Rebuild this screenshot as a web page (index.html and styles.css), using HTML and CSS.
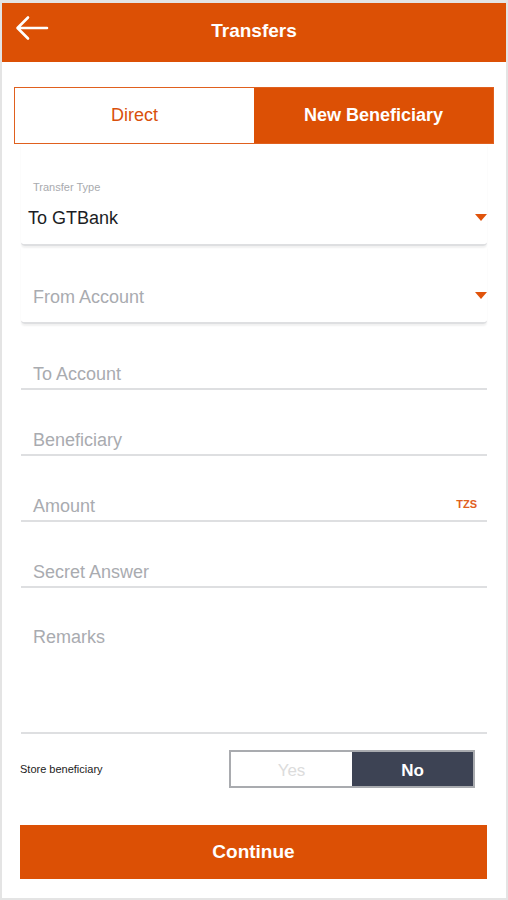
FILE: index.html
```html
<!doctype html>
<html><head>
<title>Transfers</title>
<link rel="stylesheet" href="styles.css">
</head>
<body>
<div class="screen">
	<div class="header">
		<svg class="back" width="34" height="26" viewBox="0 0 34 26">
			<path d="M32 13H3M13 2.5L2.5 13L13 23.5" fill="none" stroke="#fff" stroke-width="2.6" stroke-linecap="round" stroke-linejoin="round"/>
		</svg>
		<span class="title">Transfers</span>
	</div>

	<div class="tabs">
		<div class="tab">Direct</div>
		<div class="tab active">New Beneficiary</div>
	</div>

	<div class="form">
		<div class="select first">
			<div class="label">Transfer Type</div>
			<div class="value">To GTBank</div>
			<span class="caret"></span>
		</div>
		<div class="select">
			<div class="placeholder">From Account</div>
			<span class="caret"></span>
		</div>
		<div class="input"><div class="placeholder">To Account</div></div>
		<div class="input"><div class="placeholder">Beneficiary</div></div>
		<div class="input"><div class="placeholder">Amount</div><span class="currency">TZS</span></div>
		<div class="input"><div class="placeholder">Secret Answer</div></div>
		<div class="input remarks"><div class="placeholder">Remarks</div></div>
	</div>

	<div class="store">
		<span class="store-label">Store beneficiary</span>
		<div class="toggle">
			<div class="opt">Yes</div>
			<div class="opt on">No</div>
		</div>
	</div>

	<div class="continue">Continue</div>
</div>
</body></html>
```
FILE: styles.css
```css
body {
	margin: 0;
	font-family: "Liberation Sans", Arial, sans-serif;
}
.screen {
	width: 508px;
	height: 900px;
	box-sizing: border-box;
	border: 2px solid #e4e4e4;
	border-top-width: 3px;
	background-color: #fff;
}
.header {
	height: 59px;
	padding-bottom: 4px;
	box-sizing: border-box;
	background-color: #dc5005;
	display: flex;
	align-items: center;
	justify-content: center;
	position: relative;
}
.back {
	position: absolute;
	left: 13px;
	top: 12px;
}
.title {
	color: #fff;
	font-size: 19px;
	font-weight: bold;
}
.tabs {
	display: flex;
	margin: 25px 12px 0 12px;
	height: 57px;
	border: 1px solid #e0601e;
	box-sizing: border-box;
}
.tab {
	flex: 1;
	display: flex;
	align-items: center;
	justify-content: center;
	font-size: 18px;
	color: #d9500c;
}
.tab.active {
	background-color: #dc5005;
	color: #fff;
	font-weight: bold;
}
.form {
	margin: 0 19px 0 19px;
}
.select, .input {
	position: relative;
	padding: 40px 12px 4px 12px;
	border-bottom: 2px solid #dedfe1;
	font-size: 18px;
	line-height: 20px;
}
.select {
	border-radius: 0 0 4px 4px;
	box-shadow: 0 2px 2px rgba(0,0,0,0.06);
	padding-top: 41px;
	padding-bottom: 15px;
}
.select.first {
	padding-top: 36px;
	padding-bottom: 16px;
}
.label {
	font-size: 11px;
	line-height: 14px;
	color: #a8aaae;
	margin-bottom: 14px;
}
.value {
	color: #1b1d24;
	margin-left: -5px;
}
.placeholder {
	color: #a9abb0;
}
.caret {
	position: absolute;
	right: 0;
	bottom: 23px;
	width: 0;
	height: 0;
	border-left: 6px solid transparent;
	border-right: 6px solid transparent;
	border-top: 7px solid #e0530b;
}
.currency {
	position: absolute;
	right: 10px;
	top: 38px;
	font-size: 11px;
	font-weight: bold;
	color: #e0601e;
}
.remarks {
	padding-top: 39px;
	padding-bottom: 85px;
}
.store {
	display: flex;
	align-items: center;
	justify-content: space-between;
	margin: 16px 31px 0 18px;
}
.store-label {
	font-size: 11px;
	color: #222;
}
.toggle {
	display: flex;
	width: 246px;
	height: 38px;
	box-sizing: border-box;
	border: 2px solid #a9abaf;
}
.opt {
	flex: 1;
	display: flex;
	align-items: center;
	justify-content: center;
	padding-top: 3px;
	font-size: 17px;
	color: #dcdcdc;
}
.opt.on {
	background-color: #3d4354;
	color: #fff;
	font-weight: bold;
}
.continue {
	margin: 37px 19px 0 18px;
	height: 54px;
	background-color: #dc5005;
	color: #fff;
	font-size: 19px;
	font-weight: bold;
	display: flex;
	align-items: center;
	justify-content: center;
}
```
